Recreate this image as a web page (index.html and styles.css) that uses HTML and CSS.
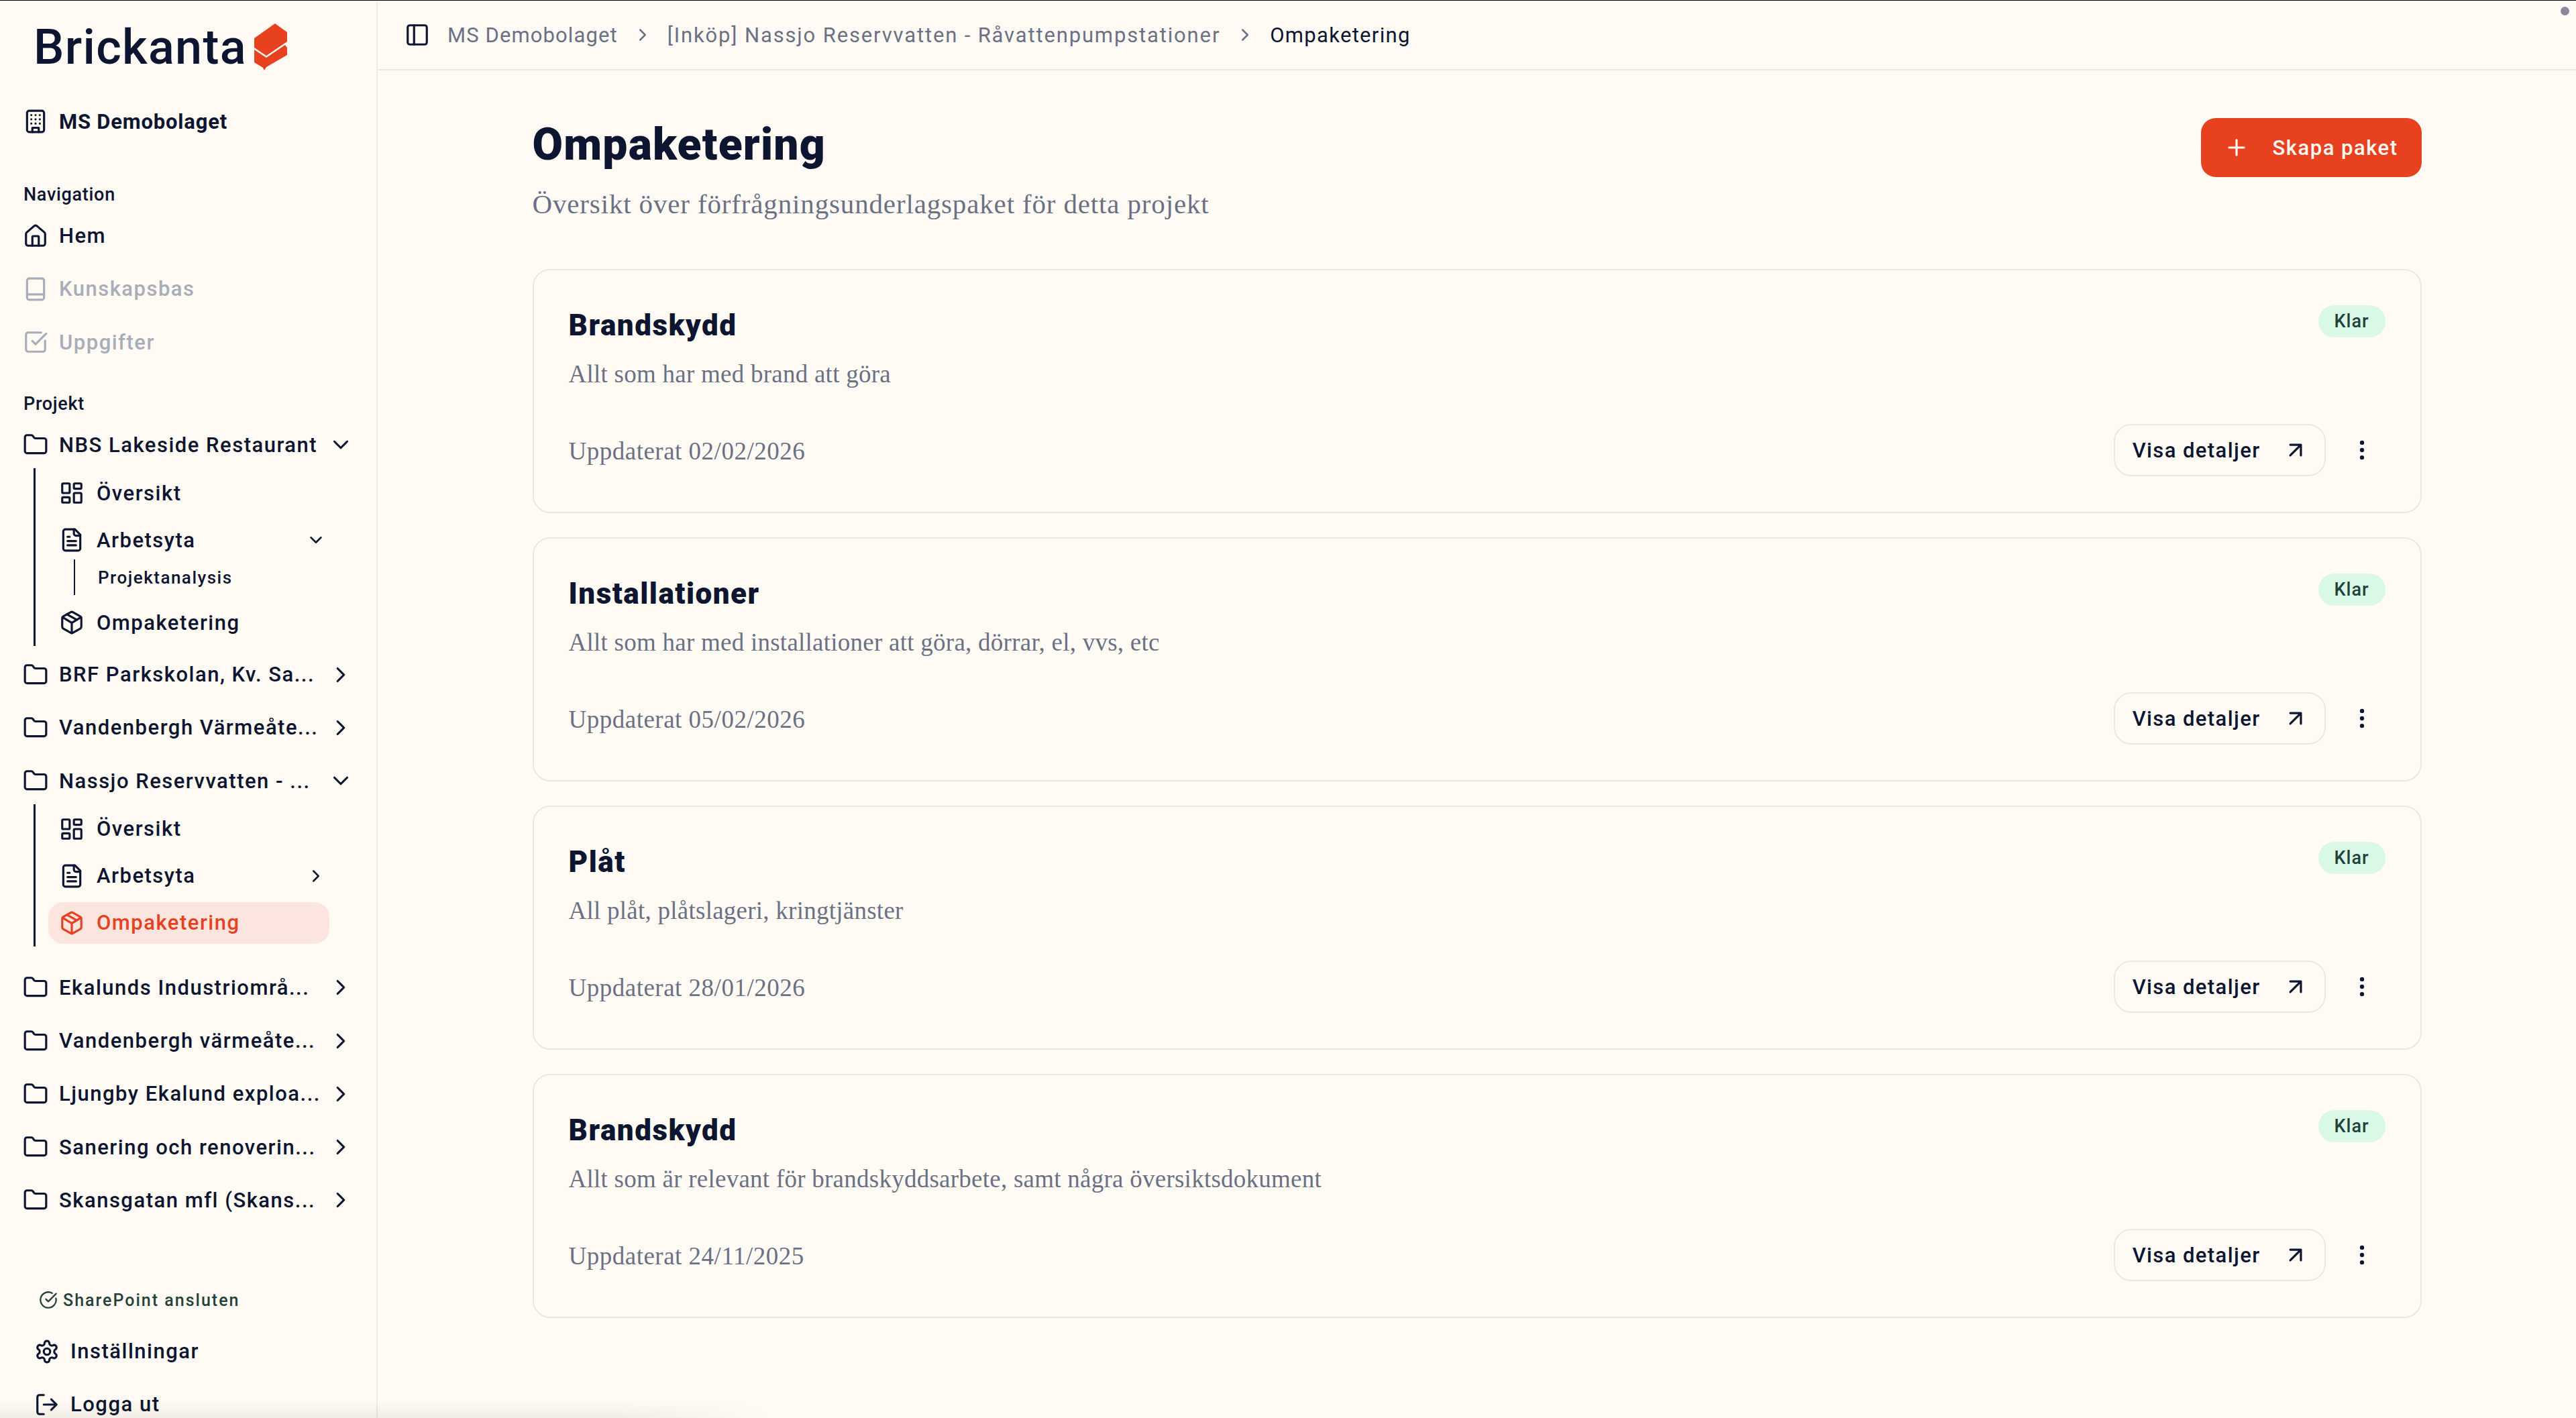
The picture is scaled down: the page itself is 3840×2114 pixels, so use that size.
FILE: index.html
```html
<!DOCTYPE html>
<html lang="sv">
<head>
    <meta charset="UTF-8">
    <title>Ompaketering</title>
    <link rel="stylesheet" href="styles.css">
</head>
<body>
    <svg class="sprite" xmlns="http://www.w3.org/2000/svg">
        <symbol id="i-building" viewBox="0 0 24 24"><rect x="4" y="2" width="16" height="20" rx="2"/><path d="M9 22v-4h6v4M8 6h.01M16 6h.01M12 6h.01M12 10h.01M12 14h.01M16 10h.01M16 14h.01M8 10h.01M8 14h.01"/></symbol>
        <symbol id="i-house" viewBox="0 0 24 24"><path d="M15 21v-8a1 1 0 0 0-1-1h-4a1 1 0 0 0-1 1v8"/><path d="M3 10a2 2 0 0 1 .709-1.528l7-5.999a2 2 0 0 1 2.582 0l7 5.999A2 2 0 0 1 21 10v9a2 2 0 0 1-2 2H5a2 2 0 0 1-2-2z"/></symbol>
        <symbol id="i-book" viewBox="0 0 24 24"><rect x="4" y="2" width="16" height="20" rx="2"/><path d="M4 17h16"/></symbol>
        <symbol id="i-check-square" viewBox="0 0 24 24"><path d="M21 10.656V19a2 2 0 0 1-2 2H5a2 2 0 0 1-2-2V5a2 2 0 0 1 2-2h12.344"/><path d="m9 11 3 3L22 4"/></symbol>
        <symbol id="i-folder" viewBox="0 0 24 24"><path d="M20 20a2 2 0 0 0 2-2V8a2 2 0 0 0-2-2h-7.9a2 2 0 0 1-1.69-.9L9.6 3.9A2 2 0 0 0 7.93 3H4a2 2 0 0 0-2 2v13a2 2 0 0 0 2 2Z"/></symbol>
        <symbol id="i-dashboard" viewBox="0 0 24 24"><rect x="3" y="3" width="7" height="9" rx="1"/><rect x="14" y="3" width="7" height="5" rx="1"/><rect x="14" y="12" width="7" height="9" rx="1"/><rect x="3" y="16" width="7" height="5" rx="1"/></symbol>
        <symbol id="i-file" viewBox="0 0 24 24"><path d="M15 2H6a2 2 0 0 0-2 2v16a2 2 0 0 0 2 2h12a2 2 0 0 0 2-2V7Z"/><path d="M14 2v4a2 2 0 0 0 2 2h4M10 9H8M16 13H8M16 17H8"/></symbol>
        <symbol id="i-package" viewBox="0 0 24 24"><path d="M11 21.73a2 2 0 0 0 2 0l7-4A2 2 0 0 0 21 16V8a2 2 0 0 0-1-1.73l-7-4a2 2 0 0 0-2 0l-7 4A2 2 0 0 0 3 8v8a2 2 0 0 0 1 1.73z"/><path d="M12 22V12"/><path d="m3.3 7 7.703 4.734a2 2 0 0 0 1.994 0L20.7 7"/><path d="m7.5 4.27 9 5.15"/></symbol>
        <symbol id="i-right" viewBox="0 0 24 24"><path d="m9 18 6-6-6-6"/></symbol>
        <symbol id="i-down" viewBox="0 0 24 24"><path d="m6 9 6 6 6-6"/></symbol>
        <symbol id="i-circle-check" viewBox="0 0 24 24"><path d="M21.801 10A10 10 0 1 1 17 3.335"/><path d="m9 11 3 3L22 4"/></symbol>
        <symbol id="i-settings" viewBox="0 0 24 24"><path d="M12.22 2h-.44a2 2 0 0 0-2 2v.18a2 2 0 0 1-1 1.73l-.43.25a2 2 0 0 1-2 0l-.15-.08a2 2 0 0 0-2.73.73l-.22.38a2 2 0 0 0 .73 2.73l.15.1a2 2 0 0 1 1 1.72v.51a2 2 0 0 1-1 1.74l-.15.09a2 2 0 0 0-.73 2.73l.22.38a2 2 0 0 0 2.73.73l.15-.08a2 2 0 0 1 2 0l.43.25a2 2 0 0 1 1 1.73V20a2 2 0 0 0 2 2h.44a2 2 0 0 0 2-2v-.18a2 2 0 0 1 1-1.73l.43-.25a2 2 0 0 1 2 0l.15.08a2 2 0 0 0 2.73-.73l.22-.39a2 2 0 0 0-.73-2.73l-.15-.08a2 2 0 0 1-1-1.74v-.5a2 2 0 0 1 1-1.74l.15-.09a2 2 0 0 0 .73-2.73l-.22-.38a2 2 0 0 0-2.73-.73l-.15.08a2 2 0 0 1-2 0l-.43-.25a2 2 0 0 1-1-1.73V4a2 2 0 0 0-2-2z"/><circle cx="12" cy="12" r="3"/></symbol>
        <symbol id="i-logout" viewBox="0 0 24 24"><path d="m16 17 5-5-5-5M21 12H9M9 21H5a2 2 0 0 1-2-2V5a2 2 0 0 1 2-2h4"/></symbol>
        <symbol id="i-panel" viewBox="0 0 24 24"><rect x="3" y="3" width="18" height="18" rx="2"/><path d="M9 3v18"/></symbol>
        <symbol id="i-plus" viewBox="0 0 24 24"><path d="M5 12h14M12 5v14"/></symbol>
        <symbol id="i-arrow" viewBox="0 0 24 24"><path d="M7 7h10v10M7 17 17 7"/></symbol>
        <symbol id="i-dots" viewBox="0 0 24 24"><circle cx="12" cy="12" r="1"/><circle cx="12" cy="5" r="1"/><circle cx="12" cy="19" r="1"/></symbol>
    </svg>

    <div class="app">
        <aside class="sidebar">
            <div class="brand">
                <span class="brand-name">Brickanta</span>
                <svg class="brand-mark" viewBox="380 35 50 71"><path d="M380 57 411 35l18 13v14l-31 21-18-12z"/><path d="M380 74l18 12 28-19 3 4v11l-31 18-3 5-2-4-13-8z"/></svg>
            </div>
            <div class="org"><svg class="icon"><use href="#i-building"/></svg><span>MS Demobolaget</span></div>

            <div class="group-label first">Navigation</div>
            <a class="row"><svg class="icon"><use href="#i-house"/></svg><span>Hem</span></a>
            <a class="row disabled"><svg class="icon"><use href="#i-book"/></svg><span>Kunskapsbas</span></a>
            <a class="row disabled"><svg class="icon"><use href="#i-check-square"/></svg><span>Uppgifter</span></a>

            <div class="group-label">Projekt</div>
            <a class="row"><svg class="icon"><use href="#i-folder"/></svg><span>NBS Lakeside Restaurant</span><svg class="chev"><use href="#i-down"/></svg></a>
            <div class="sub">
                <a class="sub-row"><svg class="icon"><use href="#i-dashboard"/></svg><span>Översikt</span></a>
                <a class="sub-row"><svg class="icon"><use href="#i-file"/></svg><span>Arbetsyta</span><svg class="chev small"><use href="#i-down"/></svg></a>
                <div class="subsub"><a>Projektanalysis</a></div>
                <a class="sub-row"><svg class="icon"><use href="#i-package"/></svg><span>Ompaketering</span></a>
            </div>
            <a class="row"><svg class="icon"><use href="#i-folder"/></svg><span>BRF Parkskolan, Kv. Sa...</span><svg class="chev"><use href="#i-right"/></svg></a>
            <a class="row"><svg class="icon"><use href="#i-folder"/></svg><span>Vandenbergh Värmeåte...</span><svg class="chev"><use href="#i-right"/></svg></a>
            <a class="row"><svg class="icon"><use href="#i-folder"/></svg><span>Nassjo Reservvatten - ...</span><svg class="chev"><use href="#i-down"/></svg></a>
            <div class="sub second">
                <a class="sub-row"><svg class="icon"><use href="#i-dashboard"/></svg><span>Översikt</span></a>
                <a class="sub-row"><svg class="icon"><use href="#i-file"/></svg><span>Arbetsyta</span><svg class="chev small"><use href="#i-right"/></svg></a>
                <a class="sub-row active"><svg class="icon"><use href="#i-package"/></svg><span>Ompaketering</span></a>
            </div>
            <a class="row"><svg class="icon"><use href="#i-folder"/></svg><span>Ekalunds Industriområ...</span><svg class="chev"><use href="#i-right"/></svg></a>
            <a class="row"><svg class="icon"><use href="#i-folder"/></svg><span>Vandenbergh värmeåte...</span><svg class="chev"><use href="#i-right"/></svg></a>
            <a class="row"><svg class="icon"><use href="#i-folder"/></svg><span>Ljungby Ekalund exploa...</span><svg class="chev"><use href="#i-right"/></svg></a>
            <a class="row"><svg class="icon"><use href="#i-folder"/></svg><span>Sanering och renoverin...</span><svg class="chev"><use href="#i-right"/></svg></a>
            <a class="row"><svg class="icon"><use href="#i-folder"/></svg><span>Skansgatan mfl (Skans...</span><svg class="chev"><use href="#i-right"/></svg></a>

            <div class="sharepoint"><svg class="icon"><use href="#i-circle-check"/></svg><span>SharePoint ansluten</span></div>
            <a class="foot-row settings"><svg class="icon"><use href="#i-settings"/></svg><span>Inställningar</span></a>
            <a class="foot-row"><svg class="icon"><use href="#i-logout"/></svg><span>Logga ut</span></a>
        </aside>

        <div class="main">
            <header class="topbar">
                <svg class="icon panel"><use href="#i-panel"/></svg>
                <span class="crumb">MS Demobolaget</span>
                <svg class="crumb-sep"><use href="#i-right"/></svg>
                <span class="crumb long">[Inköp] Nassjo Reservvatten - Råvattenpumpstationer</span>
                <svg class="crumb-sep"><use href="#i-right"/></svg>
                <span class="crumb current">Ompaketering</span>
                <span class="status-dot"></span>
            </header>

            <div class="content">
                <div class="page-head">
                    <div>
                        <h1>Ompaketering</h1>
                        <p class="lead">Översikt över förfrågningsunderlagspaket för detta projekt</p>
                    </div>
                    <button class="btn-primary"><svg class="icon"><use href="#i-plus"/></svg>Skapa paket</button>
                </div>

                <div class="cards">
                    <div class="card">
                        <div class="card-top">
                            <div>
                                <h2>Brandskydd</h2>
                                <p class="desc">Allt som har med brand att göra</p>
                            </div>
                            <span class="badge">Klar</span>
                        </div>
                        <div class="card-foot">
                            <span class="date">Uppdaterat 02/02/2026</span>
                            <button class="btn-outline">Visa detaljer<svg class="icon"><use href="#i-arrow"/></svg></button>
                            <button class="btn-more"><svg class="icon"><use href="#i-dots"/></svg></button>
                        </div>
                    </div>
                    <div class="card">
                        <div class="card-top">
                            <div>
                                <h2>Installationer</h2>
                                <p class="desc">Allt som har med installationer att göra, dörrar, el, vvs, etc</p>
                            </div>
                            <span class="badge">Klar</span>
                        </div>
                        <div class="card-foot">
                            <span class="date">Uppdaterat 05/02/2026</span>
                            <button class="btn-outline">Visa detaljer<svg class="icon"><use href="#i-arrow"/></svg></button>
                            <button class="btn-more"><svg class="icon"><use href="#i-dots"/></svg></button>
                        </div>
                    </div>
                    <div class="card">
                        <div class="card-top">
                            <div>
                                <h2>Plåt</h2>
                                <p class="desc">All plåt, plåtslageri, kringtjänster</p>
                            </div>
                            <span class="badge">Klar</span>
                        </div>
                        <div class="card-foot">
                            <span class="date">Uppdaterat 28/01/2026</span>
                            <button class="btn-outline">Visa detaljer<svg class="icon"><use href="#i-arrow"/></svg></button>
                            <button class="btn-more"><svg class="icon"><use href="#i-dots"/></svg></button>
                        </div>
                    </div>
                    <div class="card">
                        <div class="card-top">
                            <div>
                                <h2>Brandskydd</h2>
                                <p class="desc">Allt som är relevant för brandskyddsarbete, samt några översiktsdokument</p>
                            </div>
                            <span class="badge">Klar</span>
                        </div>
                        <div class="card-foot">
                            <span class="date">Uppdaterat 24/11/2025</span>
                            <button class="btn-outline">Visa detaljer<svg class="icon"><use href="#i-arrow"/></svg></button>
                            <button class="btn-more"><svg class="icon"><use href="#i-dots"/></svg></button>
                        </div>
                    </div>
                </div>
            </div>
        </div>
    </div>
    <div class="bottom-shade"></div>
</body>
</html>
```
FILE: styles.css
```css
* {
    box-sizing: border-box;
}

html,
body {
    margin: 0;
    height: 100%;
    overflow: hidden;
}

body {
    font-family: Roboto, "Noto Sans", sans-serif;
    font-weight: 500;
    font-size: 31px;
    letter-spacing: 1.5px;
    color: #0d1530;
    background-color: #fffbf4;
    white-space: nowrap;
}

.sprite {
    display: none;
}

svg {
    fill: none;
    stroke: currentColor;
    stroke-linecap: round;
    stroke-linejoin: round;
    stroke-width: 2;
    flex: none;
}

.icon {
    width: 38px;
    height: 38px;
}

.app {
    display: flex;
    height: 100vh;
    border-top: 1px solid #000;
}

/* sidebar */
.sidebar {
    width: 563px;
    flex: none;
    border-right: 2px solid #ecebe5;
    display: flex;
    flex-direction: column;
    overflow: hidden;
}

.brand {
    height: 138px;
    flex: none;
    padding-left: 50px;
    display: flex;
    align-items: center;
    gap: 11px;
}

.brand-name {
    font-size: 72px;
    font-weight: 500;
    letter-spacing: 1.3px;
}

.brand-mark {
    width: 50px;
    height: 71px;
    fill: #e8411f;
    stroke: none;
}

.org,
.row {
    display: flex;
    align-items: center;
    padding-left: 34px;
    gap: 16px;
    flex: none;
}

.org {
    height: 84px;
    font-weight: 700;
    letter-spacing: 0.8px;
}

.row {
    height: 79.25px;
}

.row span {
    flex: 1;
    min-width: 0;
}

.row .chev {
    margin-right: 34px;
}

.chev {
    width: 38px;
    height: 38px;
}

.chev.small {
    width: 30px;
    height: 30px;
    margin-left: auto;
    margin-right: 0;
}

.disabled {
    color: #a9adb8;
}

.group-label {
    height: 44px;
    flex: none;
    margin-top: 30px;
    padding-left: 35px;
    display: flex;
    align-items: center;
    font-size: 27px;
    letter-spacing: 0.7px;
}

.group-label.first {
    margin-top: 45px;
}

.sub {
    flex: none;
    margin: -5px 0 3px 50px;
    border-left: 3px solid #0d1530;
    padding: 2px 0 0 19px;
    width: 441px;
}

.sub.second {
    margin-bottom: 22px;
}

.sub-row {
    height: 70px;
    display: flex;
    align-items: center;
    padding: 0 5px 0 16px;
    gap: 18px;
}

.sub-row.active {
    height: 62px;
    margin: 4px 0;
    background-color: #fce5de;
    border-radius: 22px;
    color: #e8411f;
}

.subsub {
    height: 53px;
    margin: -6px 0 6px 38px;
    border-left: 2px solid #0d1530;
    padding-left: 34px;
    display: flex;
    align-items: center;
    font-size: 26px;
}

.sharepoint {
    flex: none;
    height: 50px;
    margin-top: 84px;
    padding-left: 58px;
    display: flex;
    align-items: center;
    gap: 8px;
    font-size: 25px;
    letter-spacing: 2px;
    color: #25423a;
}

.sharepoint .icon {
    width: 28px;
    height: 28px;
}

.foot-row {
    flex: none;
    height: 79px;
    padding-left: 51px;
    display: flex;
    align-items: center;
    gap: 16px;
}

.foot-row.settings {
    margin-top: 12px;
}

.bottom-shade {
    position: absolute;
    left: 0;
    bottom: 0;
    width: 1150px;
    height: 26px;
    background: linear-gradient(to top, rgba(60, 60, 40, 0.07), transparent);
    -webkit-mask-image: linear-gradient(to right, #000 80%, transparent);
    mask-image: linear-gradient(to right, #000 80%, transparent);
}

/* main column */
.main {
    flex: 1;
    min-width: 0;
    position: relative;
}

.topbar {
    height: 104px;
    border-bottom: 2px solid #e9e8e3;
    display: flex;
    align-items: center;
    padding-left: 40px;
    position: relative;
}

.panel {
    margin-right: 26px;
}

.crumb {
    color: #6b7085;
    font-weight: 400;
    letter-spacing: 1.1px;
}

.crumb.long {
    letter-spacing: 1.85px;
}

.crumb.current {
    color: #0d1530;
    letter-spacing: 1.3px;
}

.crumb-sep {
    width: 30px;
    height: 30px;
    margin: 0 22px;
    color: #6b7085;
}

.status-dot {
    position: absolute;
    top: 9px;
    right: 10px;
    width: 13px;
    height: 13px;
    border-radius: 50%;
    background-color: #878b9a;
}

.content {
    width: 2816px;
    margin: 0 auto;
    padding-top: 71px;
}

.page-head {
    display: flex;
    justify-content: space-between;
    align-items: flex-start;
    margin-bottom: 66px;
}

h1 {
    margin: 0;
    font-size: 66px;
    line-height: 80px;
    font-weight: 900;
    letter-spacing: 1.2px;
}

.lead {
    margin: 20px 0 3px;
    font-family: "Liberation Serif", serif;
    font-weight: 400;
    font-size: 41px;
    letter-spacing: 0.85px;
    line-height: 56px;
    color: #6b7085;
}

.btn-primary {
    display: flex;
    align-items: center;
    gap: 35px;
    height: 88px;
    padding: 0 35px 0 34px;
    border: none;
    border-radius: 22px;
    background-color: #e8411f;
    color: #fffbf4;
    font: inherit;
    letter-spacing: inherit;
}

.cards {
    display: flex;
    flex-direction: column;
    gap: 36px;
}

.card {
    height: 364px;
    border: 2px solid #e9e8e3;
    border-radius: 26px;
    padding: 52px 52px 53px;
    display: flex;
    flex-direction: column;
}

.card-top {
    display: flex;
    justify-content: space-between;
    align-items: flex-start;
}

h2 {
    margin: 0;
    font-size: 44px;
    line-height: 60px;
    font-weight: 900;
    letter-spacing: 1.5px;
}

.desc {
    margin: 17px 0 0;
    font-family: "Liberation Serif", serif;
    font-weight: 400;
    font-size: 37px;
    letter-spacing: 0.25px;
    line-height: 52px;
    color: #6b7085;
}

.badge {
    height: 48px;
    width: 100px;
    display: flex;
    align-items: center;
    justify-content: center;
    border-radius: 24px;
    background-color: #d9f9e6;
    color: #25423a;
    font-size: 27px;
    letter-spacing: 1px;
}

.card-foot {
    margin-top: auto;
    display: flex;
    align-items: center;
}

.date {
    font-family: "Liberation Serif", serif;
    font-weight: 400;
    font-size: 37px;
    letter-spacing: 0.5px;
    color: #6b7085;
    padding-top: 2px;
    margin-right: auto;
}

.btn-outline {
    display: flex;
    align-items: center;
    gap: 33px;
    height: 78px;
    padding: 0 24px 0 26px;
    border: 2px solid #e9e8e3;
    border-radius: 26px;
    background: none;
    color: inherit;
    font: inherit;
    letter-spacing: 1.4px;
}

.btn-more {
    width: 70px;
    height: 70px;
    margin-left: 19px;
    display: flex;
    align-items: center;
    justify-content: center;
    padding: 0;
    border: none;
    background: none;
    color: inherit;
}
```
